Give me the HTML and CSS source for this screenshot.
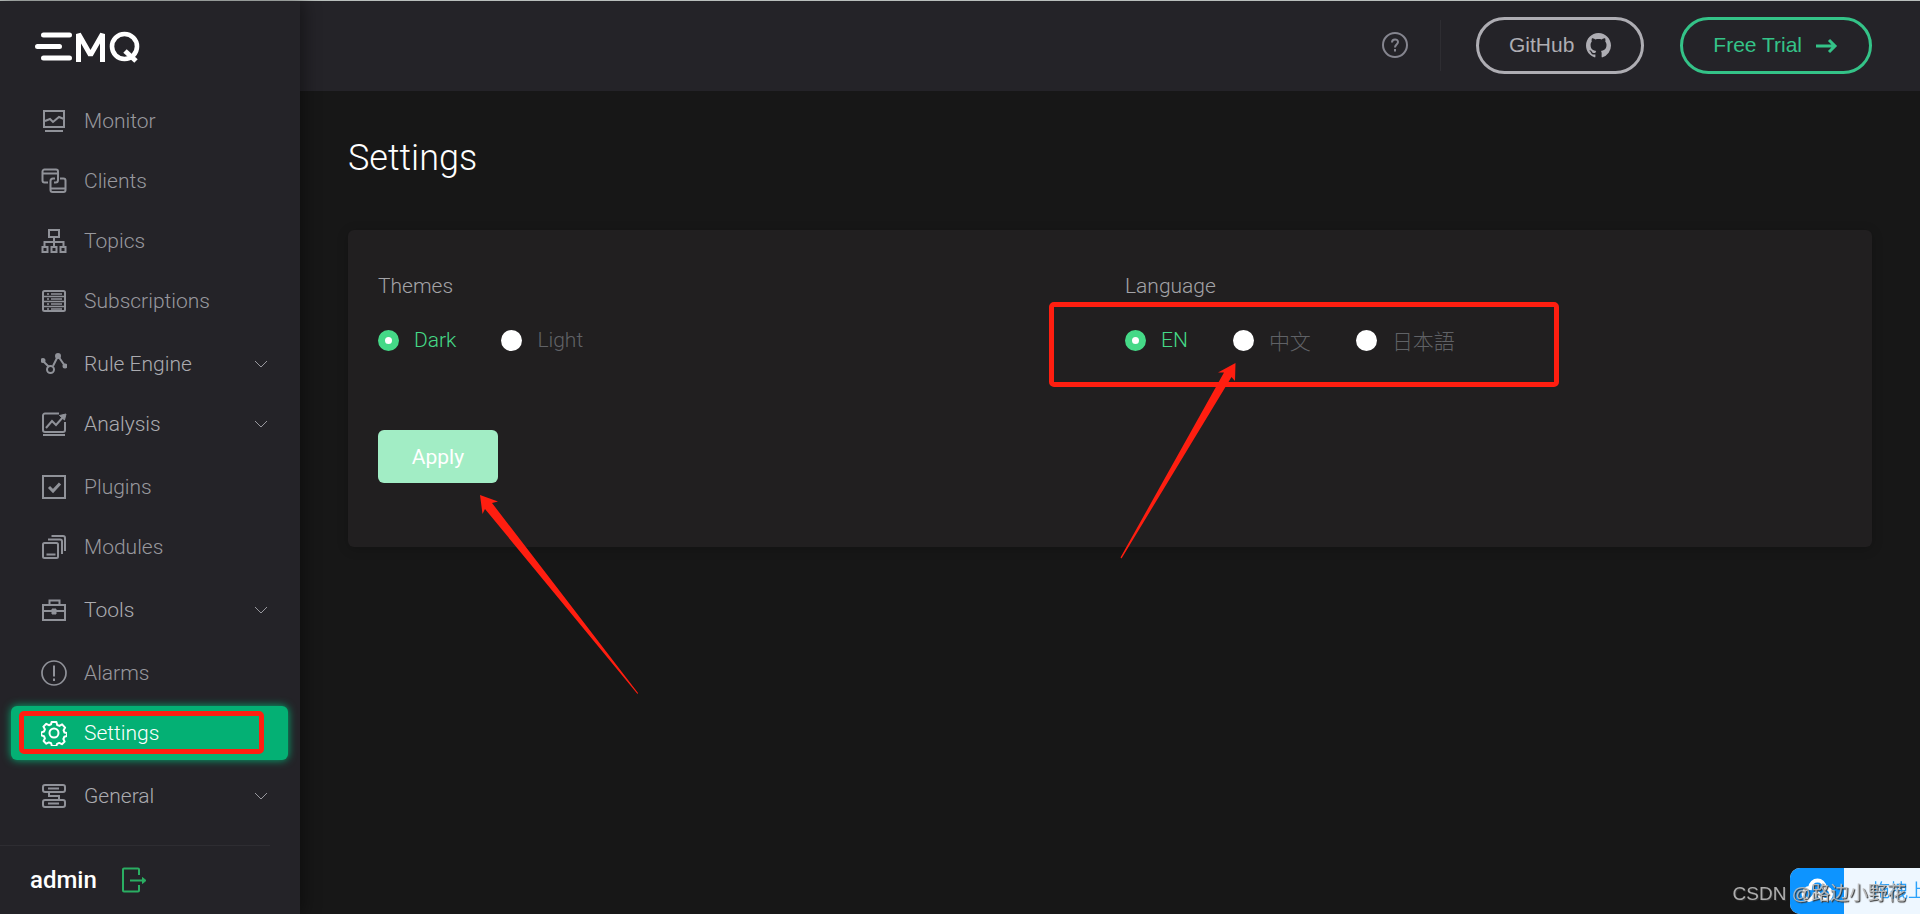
FILE: index.html
```
<!DOCTYPE html>
<html lang="en">

<head>
  <title>EMQ Dashboard</title>
  <meta charset="utf-8">
  <meta name="viewport" content="width=device-width, initial-scale=1">
  <link rel="stylesheet" href="styles.css">
</head>

<body>
  <div class="app">
    <!-- Sidebar -->
    <aside class="sidebar">
      <a class="logo" href="#" aria-label="EMQ">
        <svg width="108" height="36" viewBox="0 0 108 36" fill="none" stroke="#fff">
          <path d="M8.500 7h26M2.500 18.500h22M8.500 30h26" stroke-width="5" stroke-linecap="round" />
          <path d="M43.500 34V6L55.500 27L67.500 6V34" stroke-width="5" stroke-linejoin="bevel" />
          <circle cx="89.500" cy="18.500" r="12.500" stroke-width="4.600" />
          <path d="M90 23l11 10" stroke-width="5" />
        </svg>
      </a>
      <ul class="menu">
        <li><a href="#">
          <svg class="icon" viewBox="0 0 26 26"><path d="M3 3h20v16H3zM4 13l5-2 3 3 6-5 5 2M4 23h18" /></svg>
          Monitor</a></li>
        <li><a href="#">
          <svg class="icon" viewBox="0 0 26 26"><path d="M7 14.500H3.500a2 2 0 0 1-2-2V3.500a2 2 0 0 1 2-2H15a2 2 0 0 1 2 2V12a2.500 2.500 0 0 1-2.500 2.500H13M1.500 5.500H17M19 10.500h3.500a2 2 0 0 1 2 2v9.500a2 2 0 0 1-2 2H11.500a2 2 0 0 1-2-2v-9a2.500 2.500 0 0 1 2.500-2.500h2M9.500 20.500h15" /></svg>
          Clients</a></li>
        <li><a href="#">
          <svg class="icon" viewBox="0 0 26 26"><path d="M8 2h10v7H8zM13 9v9M3.500 18v-4h19v4M1.500 19h5v5h-5zM10.500 19h5v5h-5zM19.500 19h5v5h-5z" /></svg>
          Topics</a></li>
        <li><a href="#">
          <svg class="icon" viewBox="0 0 26 26"><rect x="2" y="3" width="22" height="20" rx="1.500" /><path d="M2 8.500h22M2 13.500h22M2 18.500h22M6 6h2M10 6h11M6 11h2M10 11h11M6 16h2M10 16h11M6 21h2M10 21h11" stroke-width="1.400" /></svg>
          Subscriptions</a></li>
        <li class="submenu"><a href="#">
          <svg class="icon" viewBox="0 0 26 26"><path d="M2 10l6 6M12 15l5-10 7 10" /><circle cx="9.500" cy="18.500" r="3.500" /><g fill="currentColor"><circle cx="2" cy="9.500" r="1.500" /><circle cx="17" cy="5" r="2" /><circle cx="24" cy="15" r="1.500" /></g></svg>
          Rule Engine <svg class="arrow" viewBox="0 0 14 8"><path d="M1 1l6 6 6-6" /></svg></a></li>
        <li class="submenu"><a href="#">
          <svg class="icon" viewBox="0 0 26 26"><path d="M18 2.500H4a2 2 0 0 0-2 2V19a2 2 0 0 0 2 2h18a2 2 0 0 0 2-2v-8M2 24h22M5 17l6-7 4 4 8-9" /><path d="M18.500 4.500l6.500-1.500-1.500 6z" fill="currentColor" stroke-width="1" /></svg>
          Analysis <svg class="arrow" viewBox="0 0 14 8"><path d="M1 1l6 6 6-6" /></svg></a></li>
        <li><a href="#">
          <svg class="icon" viewBox="0 0 26 26"><path d="M2 2h22v22H2z" /><path d="M8 13l4 4 7-7.500" stroke-width="3" /></svg>
          Plugins</a></li>
        <li><a href="#">
          <svg class="icon" viewBox="0 0 26 26"><rect x="2" y="9" width="15" height="15" rx="1.500" /><path d="M5.500 20.500h9M7 5.500h12a2 2 0 0 1 2 2V20M10.500 2H22a2 2 0 0 1 2 2v13" /></svg>
          Modules</a></li>
        <li class="submenu"><a href="#">
          <svg class="icon" viewBox="0 0 26 26"><path d="M2 8h22v15H2zM8.500 8V3.500h10V8M2 14h22" /><path d="M11 12h4v5h-4z" fill="currentColor" stroke-width="1" /></svg>
          Tools <svg class="arrow" viewBox="0 0 14 8"><path d="M1 1l6 6 6-6" /></svg></a></li>
        <li><a href="#">
          <svg class="icon" viewBox="0 0 26 26"><circle cx="13" cy="13" r="12" stroke-width="1.700" /><path d="M13 5.500v11M13 18.500v2.500" /></svg>
          Alarms</a></li>
        <li class="active"><a href="#">
          <svg class="icon" viewBox="0 0 26 26"><circle cx="13" cy="13" r="4.500" /><path d="M10.600 2h4.800l.8 3 2.200.9 2.700-1.500 3 3.200-1.500 2.700.9 2.200 2.500.5v3l-2.700.8-.9 2.200 1.200 2.600-2.700 2.600-2.700-1.300-2.100.9-.8 2.200h-4.400l-.8-2.700-2.200-.9-2.600 1.300-2.700-2.700 1.300-2.600-.9-2.200-2.700-.8v-3l2.700-.9.9-2.200-1.500-2.700 2.900-2.800 2.600 1.400 2.200-.9z" stroke-linejoin="round" /></svg>
          Settings</a>
          <span class="mark mark-menu"></span>
        </li>
        <li class="submenu"><a href="#">
          <svg class="icon" viewBox="0 0 26 26"><rect x="2" y="2" width="22" height="7" rx="2" /><rect x="2" y="17" width="22" height="7" rx="2" /><path d="M7 5.500h11M7 20.500h11M8 9v4h10v4" /></svg>
          General <svg class="arrow" viewBox="0 0 14 8"><path d="M1 1l6 6 6-6" /></svg></a></li>
      </ul>
      <div class="user">
        <span>admin</span>
        <button class="logout" aria-label="Log out">
          <svg width="26" height="26" viewBox="0 0 26 26" fill="none" stroke="#2aae62" stroke-width="2"><path d="M18 8V2.500a1 1 0 0 0-1-1H3a1 1 0 0 0-1 1v21a1 1 0 0 0 1 1h14a1 1 0 0 0 1-1V18M9 13.500h13" /><path d="M21.500 10.500l3.500 3-3.500 3z" fill="#2aae62" stroke-width="1" /></svg>
        </button>
      </div>
    </aside>

    <!-- Main -->
    <div class="main">
      <header class="topbar">
        <a class="help" href="#" aria-label="Help">
          <svg width="28" height="28" viewBox="0 0 28 28" fill="none" stroke="#85858f" stroke-width="2"><circle cx="14" cy="14" r="12" /><path d="M11 11.500c0-4 6-4 6-.5 0 2.500-3 2.500-3 5.500M14 18v2.500" /></svg>
        </a>
        <a class="link" href="#">GitHub
          <svg width="25" height="25" viewBox="0 0 16 16" fill="currentColor"><path d="M8 0C3.580 0 0 3.580 0 8c0 3.540 2.290 6.530 5.470 7.590.4.070.55-.17.55-.38 0-.19-.01-.82-.01-1.490-2.010.37-2.530-.49-2.690-.94-.09-.23-.48-.94-.82-1.130-.28-.15-.68-.52-.01-.53.63-.01 1.080.58 1.230.82.72 1.210 1.870.87 2.330.66.07-.52.28-.87.51-1.070-1.780-.2-3.640-.89-3.640-3.950 0-.87.31-1.590.82-2.150-.08-.2-.36-1.020.08-2.120 0 0 .67-.21 2.200.82.64-.18 1.320-.27 2-.27s1.360.09 2 .27c1.530-1.040 2.200-.82 2.200-.82.44 1.100.16 1.920.08 2.120.51.56.82 1.270.82 2.150 0 3.070-1.870 3.750-3.650 3.950.29.25.54.73.54 1.480 0 1.070-.01 1.930-.01 2.200 0 .21.15.46.55.38A8.010 8.010 0 0 0 16 8c0-4.420-3.580-8-8-8z" /></svg>
        </a>
        <a class="link trial" href="#">Free Trial
          <svg width="25" height="25" viewBox="0 0 25 25" fill="none" stroke="currentColor" stroke-width="3"><path d="M2 13h19M15 7l6 6-6 6" /></svg>
        </a>
      </header>

      <div class="content">
        <h1>Settings</h1>
        <form class="card">
          <div class="fields">
            <fieldset>
              <legend>Themes</legend>
              <label><input type="radio" name="theme" checked><span>Dark</span></label>
              <label><input type="radio" name="theme"><span>Light</span></label>
            </fieldset>
            <fieldset>
              <legend>Language</legend>
              <label><input type="radio" name="lang" checked><span>EN</span></label>
              <label><input type="radio" name="lang"><span>中文</span></label>
              <label><input type="radio" name="lang"><span>日本語</span></label>
              <span class="mark mark-lang"></span>
              <svg class="pointer pointer-lang" width="116" height="196" viewBox="0 0 116 196"><path d="M115.500 0L115 18l-3.500-4L1.500 195.500.500 194.500 104 9.500H98z" /></svg>
            </fieldset>
          </div>
          <div class="actions">
            <button class="apply" type="button">Apply</button>
            <svg class="pointer pointer-apply" width="160" height="200" viewBox="0 0 160 200"><path d="M0 0l18 6.500-6 1.500L158 198l-.5 1L5 14l-2.500 5z" /></svg>
          </div>
        </form>
      </div>
    </div>
  </div>

  <!-- Upload widget and watermark -->
  <div class="upload">
    <span class="cloud">
      <svg width="34" height="30" viewBox="0 0 34 30" fill="none" stroke="#fff" stroke-width="4"><path d="M9 24a6 6 0 0 1 1-12c1-10 14-10 15 0a6 6 0 0 1 0 12c-5 0-5-7-8-7s-3 7-8 7z" /></svg>
    </span>
    <span class="upload-text">拖拽上传</span>
  </div>
  <div class="watermark">CSDN @路边小野花</div>
</body>

</html>
```
FILE: styles.css
```
* {
  box-sizing: border-box;
}

body {
  margin: 0;
  font-family: Roboto, "Noto Sans CJK SC", sans-serif;
  font-size: 21px;
  font-weight: 300;
  color: #a3a3a7;
  background-color: #171717;
}

a {
  color: inherit;
  text-decoration: none;
}

.app {
  display: flex;
  min-height: 100vh;
  border-top: 1px solid #b9bfbc;
}

/* Sidebar */
.sidebar {
  position: relative;
  display: flex;
  flex-direction: column;
  flex: 0 0 300px;
  background-color: #242328;
  box-shadow: 4px 0 16px rgba(0, 0, 0, 0.4);
}

.logo {
  height: 87px;
  padding: 27px 0 0 35px;
}

.menu {
  display: block;
  margin: 0;
  padding: 0 12px 0 11px;
  list-style: none;
}

.menu li {
  position: relative;
  height: 54px;
  margin: 6px 0;
}

.menu .submenu {
  height: 60px;
  margin: 0;
}

.menu a {
  display: flex;
  align-items: center;
  height: 100%;
  padding: 0 20px 0 30px;
  color: #98989e;
}

.menu .submenu a {
  color: #ababb0;
}

.icon {
  width: 26px;
  height: 26px;
  margin-right: 17px;
  fill: none;
  stroke: currentColor;
  stroke-width: 2;
  color: #909299;
}

.arrow {
  width: 14px;
  height: 8px;
  margin-left: auto;
  fill: none;
  stroke: #98989e;
}

.menu .active {
  border-radius: 6px;
  background-color: #04b074;
  box-shadow: 0 0 8px #04b074;
}

.menu .active a,
.menu .active .icon {
  color: #fff;
}

.user {
  display: flex;
  align-items: center;
  gap: 24px;
  height: 68px;
  margin: 19px 30px 0 0;
  padding-left: 30px;
  border-top: 1px solid #2e2d32;
  font-size: 24px;
  font-weight: 500;
  color: #fff;
}

.logout {
  display: flex;
  padding: 0;
  border: none;
  background: transparent;
  cursor: pointer;
}

/* Header */
.main {
  flex: 1;
  min-width: 0;
}

.topbar {
  display: flex;
  align-items: center;
  justify-content: flex-end;
  height: 90px;
  padding: 0 48px 2px 0;
  background-color: #242328;
}

.help {
  display: flex;
  align-items: center;
  height: 51px;
  margin-right: 35px;
  padding-right: 31px;
  border-right: 1px solid #2e2d32;
}

.link {
  display: flex;
  align-items: center;
  gap: 12px;
  height: 57px;
  padding: 0 30px;
  border: 3px solid #aeadb3;
  border-radius: 29px;
  font-family: "Liberation Sans", sans-serif;
  font-size: 21px;
  font-weight: 400;
  color: #aeadb3;
}

.trial {
  margin-left: 36px;
  border-color: #34c388;
  color: #34c388;
}

/* Settings page */
.content {
  padding: 43px 48px;
}

h1 {
  margin: 0 0 48px;
  font-size: 36px;
  line-height: 48px;
  font-weight: 300;
  color: #fff;
}

.card {
  padding: 42px 30px 64px;
  border-radius: 6px;
  background-color: #211f20;
  box-shadow: 0 2px 12px rgba(0, 0, 0, 0.2);
}

.fields {
  display: grid;
  grid-template-columns: 1fr 1fr;
  gap: 30px;
}

fieldset {
  position: relative;
  display: flex;
  gap: 45px;
  min-width: 0;
  margin: 0;
  padding: 0;
  border: none;
}

legend {
  margin-bottom: 25px;
  padding: 0;
  line-height: 28px;
}

label {
  display: flex;
  align-items: center;
  gap: 15px;
  height: 30px;
  color: #606266;
}

input[type="radio"] {
  appearance: none;
  width: 21px;
  height: 21px;
  margin: 0;
  border-radius: 50%;
  background-color: #fff;
}

input[type="radio"]:checked {
  border: 7px solid #45d987;
}

input[type="radio"]:checked + span {
  color: #45d987;
}

.actions {
  position: relative;
  margin-top: 75px;
}

.apply {
  display: block;
  width: 120px;
  height: 53px;
  border: none;
  border-radius: 6px;
  background-color: #a2edc5;
  font-family: inherit;
  font-size: 21px;
  color: #fff;
}

/* Red marks over the page */
.mark {
  position: absolute;
  border: 5px solid #ff1e10;
  border-radius: 5px;
}

.mark-menu {
  inset: 5px 24px 6px 8px;
}

.mark-lang {
  top: -23px;
  left: -76px;
  width: 510px;
  height: 85px;
}

.pointer {
  position: absolute;
  fill: #ff1e10;
}

.pointer-lang {
  top: 38px;
  left: -5px;
}

.pointer-apply {
  top: 65px;
  left: 102px;
}

/* Upload widget */
.upload {
  position: fixed;
  right: 0;
  bottom: 0;
  display: flex;
  width: 130px;
  height: 46px;
  overflow: hidden;
  border-radius: 10px 0 0 10px;
  background-color: #eef7ff;
  white-space: nowrap;
}

.cloud {
  display: flex;
  flex: 0 0 54px;
  align-items: center;
  justify-content: center;
  background-color: #0d94ff;
}

.upload-text {
  padding-left: 28px;
  font-size: 18px;
  font-weight: 400;
  line-height: 46px;
  color: #2ba2fb;
}

.watermark {
  position: fixed;
  right: 14px;
  bottom: 6px;
  font-family: "Liberation Sans", "Noto Sans CJK SC", sans-serif;
  font-size: 19px;
  line-height: 28px;
  font-weight: 400;
  color: rgba(190, 190, 190, 0.9);
  text-shadow: 1px 1px 1px #333;
}
```
